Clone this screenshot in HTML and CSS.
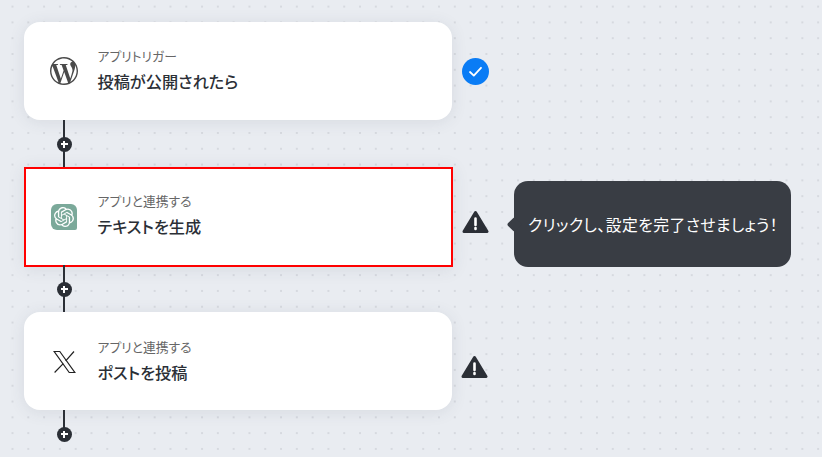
FILE: index.html
```html
<!DOCTYPE html>
<html lang="ja">
<head>
    <meta charset="UTF-8">
    <meta name="viewport" content="width=device-width, initial-scale=1.0">
    <title>フローボット</title>
    <link rel="stylesheet" href="styles.css">
</head>
<body>
    <div class="flow">
        <div class="step">
            <div class="card">
                <svg class="app-icon wp" viewBox="0 0 24 24"><path d="M21.469 6.825c.84 1.537 1.318 3.3 1.318 5.175 0 3.979-2.156 7.456-5.363 9.325l3.295-9.527c.615-1.54.82-2.771.82-3.864 0-.405-.026-.78-.07-1.11m-7.981.105c.647-.03 1.232-.105 1.232-.105.582-.075.514-.93-.067-.899 0 0-1.755.135-2.88.135-1.064 0-2.85-.15-2.85-.15-.585-.03-.661.855-.075.885 0 0 .54.061 1.125.09l1.68 4.605-2.37 7.08L5.354 6.9c.649-.03 1.234-.1 1.234-.1.585-.075.516-.93-.065-.896 0 0-1.746.138-2.874.138-.2 0-.438-.008-.69-.015C4.911 3.15 8.235 1.215 12 1.215c2.809 0 5.365 1.072 7.286 2.833-.046-.003-.091-.009-.141-.009-1.06 0-1.812.923-1.812 1.914 0 .89.513 1.643 1.06 2.531.411.72.89 1.643.89 2.977 0 .915-.354 1.994-.821 3.479l-1.075 3.585-3.9-11.61.001.014zM12 22.784c-1.059 0-2.081-.153-3.048-.437l3.237-9.406 3.315 9.087c.024.053.05.101.078.149-1.12.393-2.325.609-3.582.609M1.211 12c0-1.564.336-3.05.935-4.39L7.29 21.709C3.694 19.96 1.212 16.271 1.211 12M12 0C5.385 0 0 5.385 0 12s5.385 12 12 12 12-5.385 12-12S18.615 0 12 0"/></svg>
                <div class="card-text">
                    <div class="label">アプリトリガー</div>
                    <div class="title">投稿が公開されたら</div>
                </div>
            </div>
            <svg class="status-check" viewBox="0 0 27 27"><circle cx="13.5" cy="13.5" r="13.5"/><path d="M8 14l3.8 3.6L19 9.8"/></svg>
        </div>
        <div class="connector"><span class="add"></span></div>

        <div class="step">
            <div class="card selected">
                <div class="app-tile">
                    <svg viewBox="0 0 24 24"><path d="M22.2819 9.8211a5.9847 5.9847 0 0 0-.5157-4.9108 6.0462 6.0462 0 0 0-6.5098-2.9A6.0651 6.0651 0 0 0 4.9807 4.1818a5.9847 5.9847 0 0 0-3.9977 2.9 6.0462 6.0462 0 0 0 .7427 7.0966 5.98 5.98 0 0 0 .511 4.9107 6.051 6.051 0 0 0 6.5146 2.9001A5.9847 5.9847 0 0 0 13.2599 24a6.0557 6.0557 0 0 0 5.7718-4.2058 5.9894 5.9894 0 0 0 3.9977-2.9001 6.0557 6.0557 0 0 0-.7475-7.0729zm-9.022 12.6081a4.4755 4.4755 0 0 1-2.8764-1.0408l.1419-.0804 4.7783-2.7582a.7948.7948 0 0 0 .3927-.6813v-6.7369l2.02 1.1686a.071.071 0 0 1 .038.052v5.5826a4.504 4.504 0 0 1-4.4945 4.4944zm-9.6607-4.1254a4.4708 4.4708 0 0 1-.5346-3.0137l.142.0852 4.783 2.7582a.7712.7712 0 0 0 .7806 0l5.8428-3.3685v2.3324a.0804.0804 0 0 1-.0332.0615L9.74 19.9502a4.4992 4.4992 0 0 1-6.1408-1.6464zM2.3408 7.8956a4.485 4.485 0 0 1 2.3655-1.9728V11.6a.7664.7664 0 0 0 .3879.6765l5.8144 3.3543-2.0201 1.1685a.0757.0757 0 0 1-.071 0l-4.8303-2.7865A4.504 4.504 0 0 1 2.3408 7.872zm16.5963 3.8558L13.1038 8.364 15.1192 7.2a.0757.0757 0 0 1 .071 0l4.8303 2.7913a4.4944 4.4944 0 0 1-.6765 8.1042v-5.6772a.79.79 0 0 0-.407-.667zm2.0107-3.0231l-.142-.0852-4.7735-2.7818a.7759.7759 0 0 0-.7854 0L9.409 9.2297V6.8974a.0662.0662 0 0 1 .0284-.0615l4.8303-2.7866a4.4992 4.4992 0 0 1 6.6802 4.66zM8.3065 12.863l-2.02-1.1638a.0804.0804 0 0 1-.038-.0567V6.0742a4.4992 4.4992 0 0 1 7.3757-3.4537l-.142.0805L8.704 5.459a.7948.7948 0 0 0-.3927.6813zm1.0976-2.3654l2.602-1.4998 2.6069 1.4998v2.9994l-2.5974 1.4997-2.6067-1.4997Z"/></svg>
                </div>
                <div class="card-text">
                    <div class="label">アプリと連携する</div>
                    <div class="title">テキストを生成</div>
                </div>
            </div>
            <svg class="status-warn" viewBox="0 0 27 24"><path class="tri" d="M13.5 2.5L25 21.5H2z"/><path class="mark" d="M13.5 8.5v6.5M13.5 18v1"/></svg>
            <div class="tooltip">クリックし、設定を完了させましょう！</div>
        </div>
        <div class="connector"><span class="add"></span></div>

        <div class="step">
            <div class="card third">
                <svg class="app-icon x" viewBox="0 0 23 24"><path d="M1.2 1.5h5.6l15 21h-5.6z"/><path d="M21 1.5l-8.3 9.4M10.2 13.6L1.6 22.5"/></svg>
                <div class="card-text">
                    <div class="label">アプリと連携する</div>
                    <div class="title">ポストを投稿</div>
                </div>
            </div>
            <svg class="status-warn" viewBox="0 0 27 24"><path class="tri" d="M13.5 2.5L25 21.5H2z"/><path class="mark" d="M13.5 8.5v6.5M13.5 18v1"/></svg>
        </div>
        <div class="connector last"><span class="add"></span></div>
    </div>
</body>
</html>
```

FILE: styles.css
```css
html, body {
    height: 100%;
}

body {
    margin: 0;
    overflow: hidden;
    font-family: "Noto Sans CJK JP", "Noto Sans", sans-serif;
    background-color: #e9ecf1;
    background-image: radial-gradient(circle, #d6d9df 0.9px, transparent 1.2px);
    background-size: 15.8px 15.8px;
    background-position: 4.6px -1.3px;
}

.flow {
    display: flex;
    flex-direction: column;
    padding: 22px 0 0 24px;
}

.step {
    position: relative;
    display: flex;
    align-items: center;
    height: 98px;
}

.card {
    box-sizing: border-box;
    display: flex;
    align-items: center;
    width: 428px;
    height: 98px;
    padding-left: 26px;
    background: #fff;
    border-radius: 16px;
    box-shadow: 0 2px 16px rgba(60, 70, 90, 0.1);
}

.card.selected {
    align-self: flex-start;
    height: 100px;
    width: 429px;
    border: 2px solid #f00;
    border-radius: 0;
    padding-left: 24px;
}

.app-icon {
    flex: none;
    width: 28px;
    height: 28px;
}

.app-icon.wp {
    fill: #4a4a4a;
}

.app-icon.x {
    width: 23px;
    height: 24px;
    margin: 2px 2.5px 0;
    fill: none;
    stroke: #222;
    stroke-width: 1.2;
}

.app-tile {
    flex: none;
    display: flex;
    align-items: center;
    justify-content: center;
    box-sizing: border-box;
    width: 26px;
    height: 26px;
    margin: 0 1px;
    background: #7ba99a;
    border-radius: 6px 6px 2px 6px;
}

.app-tile svg {
    width: 20px;
    height: 20px;
    fill: #fff;
}

.card-text {
    margin-left: 19.5px;
    margin-top: -2px;
    font-feature-settings: "palt";
}

.selected .card-text {
    margin-top: -4px;
}

.third .card-text {
    margin-top: 0;
}

.label {
    font-size: 12.8px;
    line-height: 16px;
    color: #666;
}

.title {
    margin-top: 6px;
    font-size: 16.2px;
    line-height: 22px;
    font-weight: 500;
    color: #2b2f36;
}

.status-check {
    flex: none;
    width: 27px;
    height: 27px;
    margin-left: 10px;
}

.status-check circle {
    fill: #0a7cf5;
}

.status-check path {
    fill: none;
    stroke: #fff;
    stroke-width: 1.8;
    stroke-linecap: round;
    stroke-linejoin: round;
}

.status-warn {
    flex: none;
    width: 27px;
    height: 24px;
    margin: 12px 0 0 9px;
}

.status-warn .tri {
    fill: #2b2f36;
    stroke: #2b2f36;
    stroke-width: 3;
    stroke-linejoin: round;
}

.status-warn .mark {
    fill: none;
    stroke: #fff;
    stroke-width: 2.6;
    stroke-linecap: round;
}

.tooltip {
    position: absolute;
    left: 490px;
    top: 14px;
    box-sizing: border-box;
    display: flex;
    align-items: center;
    width: 277px;
    height: 86px;
    padding: 0 0 0 14px;
    background: #393d44;
    border-radius: 14px;
    color: #fff;
    font-size: 15.8px;
    letter-spacing: 0.45px;
    white-space: nowrap;
    font-feature-settings: "palt";
}

.tooltip::before {
    content: "";
    position: absolute;
    left: -5px;
    top: 38px;
    width: 11px;
    height: 11px;
    background: #393d44;
    border-radius: 2px;
    transform: rotate(45deg);
}

.connector {
    position: relative;
    width: 2px;
    height: 47px;
    margin-left: 39px;
    background: #2b2f36;
}

.connector.last {
    height: 24px;
}

.add {
    position: absolute;
    left: -6.5px;
    top: 16.5px;
    width: 15px;
    height: 15px;
    border-radius: 50%;
    background: #2b2f36;
}

.add::before,
.add::after {
    content: "";
    position: absolute;
    background: #fff;
}

.add::before {
    left: 4px;
    top: 6.5px;
    width: 7px;
    height: 2px;
}

.add::after {
    left: 6.5px;
    top: 4px;
    width: 2px;
    height: 7px;
}
```
